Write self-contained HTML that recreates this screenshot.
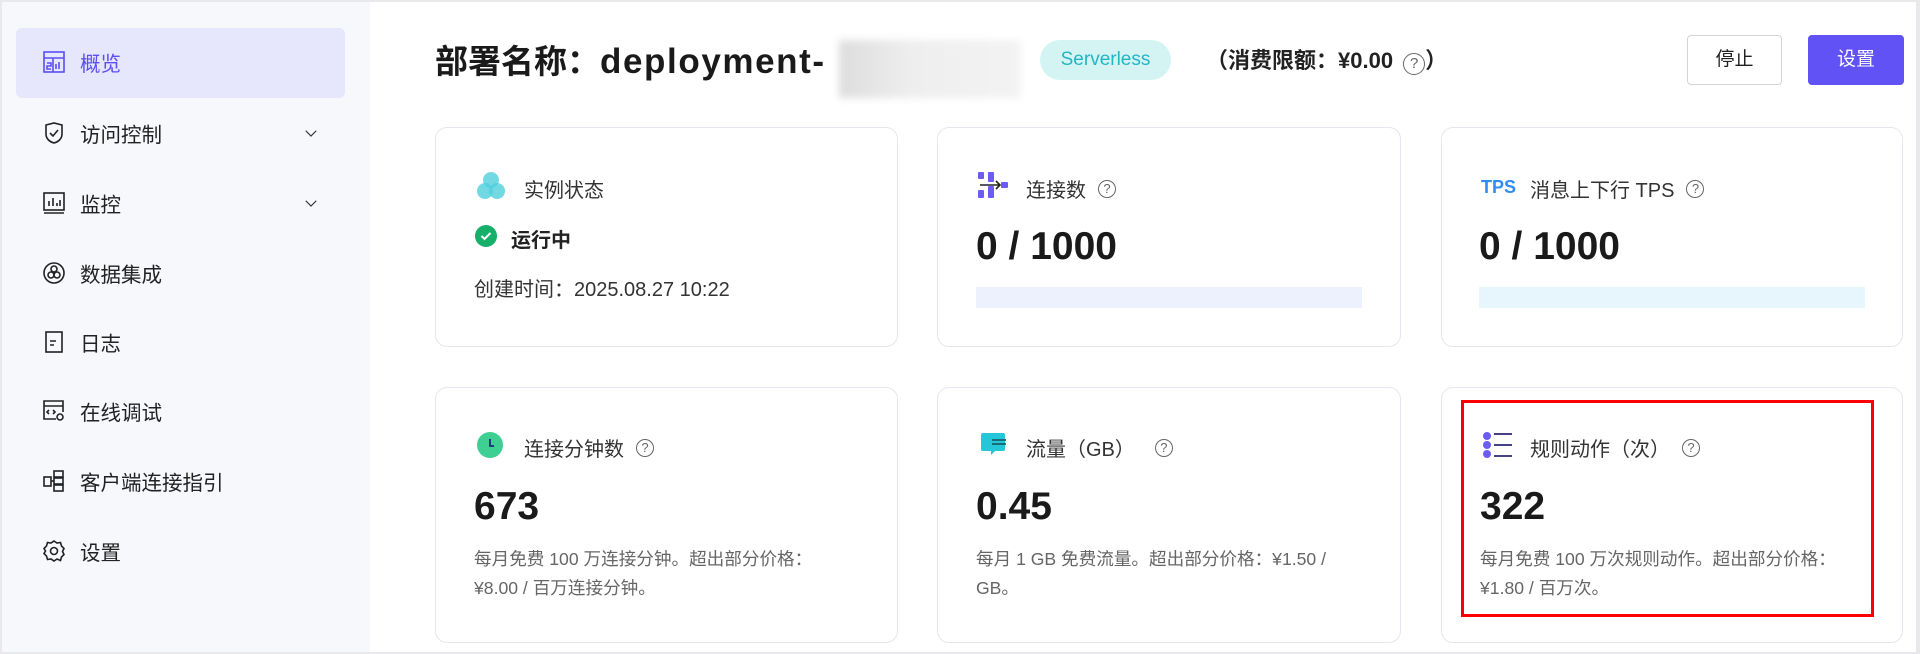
<!DOCTYPE html>
<html><head><meta charset="utf-8"><style>
*{margin:0;padding:0;box-sizing:border-box}
body{width:1920px;height:654px;overflow:hidden;background:#fff;font-family:"Liberation Sans","Noto Sans CJK SC",sans-serif;color:#222;position:relative}
.a{position:absolute}
.frame{left:0;top:0;width:1920px;height:654px;border:2px solid #e9e9ec;border-right-width:4px}
.side{left:2px;top:2px;width:368px;height:650px;background:#f7f8fc}
.act{left:16px;top:28px;width:329px;height:70px;background:#e6e6fd;border-radius:6px}
.mi{left:42px;height:30px;display:flex;align-items:center;font-size:20.5px;color:#222}
.mi svg{width:24px;height:24px;margin-right:14px}
.chev{left:302px}
.card{border:1.5px solid #e4e7ee;border-radius:12px;background:#fff}
.ct{font-size:20px;color:#333;display:flex;align-items:center;white-space:nowrap}
.q{display:inline-block;width:18px;height:18px;border:1.5px solid #666;border-radius:50%;font-size:13px;line-height:15px;text-align:center;color:#666;margin-left:12px}
.val{font-size:39px;font-weight:bold;color:#1a1a1a;line-height:1}
.desc{font-size:17.6px;color:#666;line-height:29px}
</style></head><body>
<div class="a side"></div>
<div class="a act"></div>
<div class="a mi" style="top:47px;color:#5b4ff5"><svg viewBox="0 0 24 24" fill="none" stroke="#5b4ff5" stroke-width="1.6"><rect x="2" y="2" width="20" height="20"/><path d="M2 8h20M11 8v14M5 13h4v3H5v3h4M14 14v5M17 12v7"/></svg>概览</div>
<div class="a mi" style="top:118px"><svg viewBox="0 0 24 24" fill="none" stroke="#222" stroke-width="1.6"><path d="M4 4l8-2 8 2v9c0 5-4 8-8 9-4-1-8-4-8-9z"/><path d="M8 12l3 3 5-6"/></svg>访问控制</div>
<div class="a mi chev" style="top:118px;font-size:16px"><svg viewBox="0 0 24 24" fill="none" stroke="#333" stroke-width="1.6" style="width:18px"><path d="M5 9l7 7 7-7"/></svg></div>
<div class="a mi" style="top:188px"><svg viewBox="0 0 24 24" fill="none" stroke="#222" stroke-width="1.6"><rect x="2" y="2" width="20" height="17"/><path d="M2 22h20M7 15v-5M11 15V7M15 15v-3M18 15V9"/></svg>监控</div>
<div class="a mi chev" style="top:188px"><svg viewBox="0 0 24 24" fill="none" stroke="#333" stroke-width="1.6" style="width:18px"><path d="M5 9l7 7 7-7"/></svg></div>
<div class="a mi" style="top:258px"><svg viewBox="0 0 24 24" fill="none" stroke="#222" stroke-width="1.6"><circle cx="12" cy="12" r="10"/><circle cx="12" cy="8" r="3"/><circle cx="9" cy="14" r="3"/><circle cx="15" cy="14" r="3"/></svg>数据集成</div>
<div class="a mi" style="top:327px"><svg viewBox="0 0 24 24" fill="none" stroke="#222" stroke-width="1.6"><rect x="4" y="2" width="16" height="20"/><path d="M8 11h6M8 15h4"/></svg>日志</div>
<div class="a mi" style="top:396px"><svg viewBox="0 0 24 24" fill="none" stroke="#222" stroke-width="1.6"><path d="M14 20H2V2h19v11M2 7h19M7 11l-2 2 2 2M11 11l2 2-2 2"/><circle cx="18" cy="18" r="3"/></svg>在线调试</div>
<div class="a mi" style="top:466px"><svg viewBox="0 0 24 24" fill="none" stroke="#222" stroke-width="1.6"><rect x="12" y="2" width="9" height="6"/><rect x="12" y="9" width="9" height="6"/><rect x="12" y="16" width="9" height="6"/><rect x="2" y="8" width="7" height="9"/><path d="M9 12h3"/></svg>客户端连接指引</div>
<div class="a mi" style="top:536px"><svg viewBox="0 0 24 24" fill="none" stroke="#222" stroke-width="1.6"><path d="M12 2l3 2 3.5-.5 1 3.5 2.5 2.5-1.5 3 1.5 3-2.5 2.5-1 3.5L15 20l-3 2-3-2-3.5.5-1-3.5L2 14.5 3.5 12 2 9.5 4.5 7l1-3.5L9 4z"/><circle cx="12" cy="12" r="3.5"/></svg>设置</div>

<div class="a" style="left:435px;top:40px;font-size:33px;font-weight:bold;line-height:44px;color:#1a1a1a;white-space:nowrap">部署名称：<span style="letter-spacing:1.6px;font-size:35px">deployment-</span></div>
<div class="a" style="left:839px;top:40px;width:182px;height:58px;background:linear-gradient(90deg,#ddd,#eee 40%,#f3f3f3);filter:blur(4px)"></div>
<div class="a" style="left:1040px;top:40px;width:131px;height:40px;border-radius:20px;background:#d4f4f4;color:#22b6c2;font-size:19px;line-height:40px;text-align:center">Serverless</div>
<div class="a" style="left:1206px;top:43px;font-size:22px;font-weight:bold;line-height:36px;color:#222;white-space:nowrap">（消费限额：¥0.00 <span class="q" style="margin:0 0 0 4px;font-weight:normal;width:22px;height:22px;line-height:19px;font-size:15px">?</span>）</div>
<div class="a" style="left:1687px;top:35px;width:95px;height:50px;border:1.5px solid #d4d4d8;border-radius:4px;font-size:19px;line-height:47px;text-align:center;color:#222">停止</div>
<div class="a" style="left:1808px;top:35px;width:96px;height:50px;background:#6052f5;border-radius:4px;font-size:19px;line-height:50px;text-align:center;color:#fff">设置</div>

<div class="a card" style="left:435px;top:127px;width:463px;height:220px"></div>
<div class="a card" style="left:937px;top:127px;width:464px;height:220px"></div>
<div class="a card" style="left:1441px;top:127px;width:462px;height:220px"></div>
<div class="a card" style="left:435px;top:387px;width:463px;height:256px"></div>
<div class="a card" style="left:937px;top:387px;width:464px;height:256px"></div>
<div class="a card" style="left:1441px;top:387px;width:462px;height:256px"></div>

<!-- card1 -->
<svg class="a" style="left:475px;top:170px" width="32" height="32" viewBox="0 0 32 32"><g fill="#4fd0dc" fill-opacity=".8"><circle cx="16" cy="10" r="8"/><circle cx="10" cy="21" r="8"/><circle cx="22" cy="21" r="8"/></g></svg>
<div class="a ct" style="left:524px;top:174px">实例状态</div>
<svg class="a" style="left:475px;top:225px" width="22" height="22" viewBox="0 0 22 22"><circle cx="11" cy="11" r="11" fill="#16b06a"/><path d="M6.5 11l3 3 6-6" stroke="#fff" stroke-width="2" fill="none"/></svg>
<div class="a ct" style="left:511px;top:224px;font-weight:bold;color:#222">运行中</div>
<div class="a ct" style="left:474px;top:273px;color:#333">创建时间：2025.08.27 10:22</div>

<!-- card2 -->
<svg class="a" style="left:978px;top:172px" width="30" height="26" viewBox="0 0 30 26"><g fill="#6b5cf6"><rect x="0" y="0" width="6" height="7" rx="1"/><rect x="0" y="18" width="6" height="8" rx="1"/><rect x="10" y="0" width="6" height="10" rx="1"/><rect x="10" y="14" width="6" height="12" rx="1"/><rect x="23" y="10" width="7" height="6" rx="1"/></g><path d="M2 13h20M18 9l4 4-4 4" stroke="#222" stroke-width="1.6" fill="none"/></svg>
<div class="a ct" style="left:1026px;top:174px">连接数<span class="q">?</span></div>
<div class="a val" style="left:976px;top:227px">0 / 1000</div>
<div class="a" style="left:976px;top:287px;width:386px;height:21px;background:#edf0fd"></div>

<!-- card3 -->
<div class="a" style="left:1481px;top:175px;font-size:18px;font-weight:bold;color:#2f8cf0;line-height:24px">TPS</div>
<div class="a ct" style="left:1530px;top:174px">消息上下行 TPS<span class="q">?</span></div>
<div class="a val" style="left:1479px;top:227px">0 / 1000</div>
<div class="a" style="left:1479px;top:287px;width:386px;height:21px;background:#e7f6fc"></div>

<!-- row2 -->
<svg class="a" style="left:476px;top:431px" width="28" height="28" viewBox="0 0 28 28"><circle cx="14" cy="14" r="13" fill="#3fcf92"/><path d="M14 8v7h4" stroke="#1f2a80" stroke-width="1.8" fill="none"/></svg>
<div class="a ct" style="left:524px;top:433px">连接分钟数<span class="q">?</span></div>
<div class="a val" style="left:474px;top:487px">673</div>
<div class="a desc" style="left:474px;top:545px">每月免费 100 万连接分钟。超出部分价格：<br>¥8.00 / 百万连接分钟。</div>

<svg class="a" style="left:981px;top:433px" width="28" height="26" viewBox="0 0 28 26"><path d="M2 0h20a2 2 0 0 1 2 2v14a2 2 0 0 1-2 2H14l-4 4v-4H2a2 2 0 0 1-2-2V2a2 2 0 0 1 2-2z" fill="#24c6d8"/><path d="M11 7h14M11 11h14" stroke="#17606a" stroke-width="1.8"/></svg>
<div class="a ct" style="left:1026px;top:433px">流量（GB）<span class="q" style="margin-left:20px">?</span></div>
<div class="a val" style="left:976px;top:487px">0.45</div>
<div class="a desc" style="left:976px;top:545px">每月 1 GB 免费流量。超出部分价格：¥1.50 /<br>GB。</div>

<svg class="a" style="left:1483px;top:432px" width="30" height="26" viewBox="0 0 30 26"><g fill="#6b5cf6"><circle cx="4" cy="4" r="4"/><circle cx="4" cy="13" r="4"/><circle cx="4" cy="22" r="4"/></g><path d="M11 2h18M11 13h18M11 24h18" stroke="#2a2a70" stroke-width="1.8"/></svg>
<div class="a ct" style="left:1530px;top:433px">规则动作（次）<span class="q" style="margin-left:12px">?</span></div>
<div class="a val" style="left:1480px;top:487px">322</div>
<div class="a desc" style="left:1480px;top:545px">每月免费 100 万次规则动作。超出部分价格：<br>¥1.80 / 百万次。</div>
<div class="a" style="left:1461px;top:400px;width:413px;height:217px;border:3.5px solid #f00"></div>

<div class="a frame"></div>
</body></html>
